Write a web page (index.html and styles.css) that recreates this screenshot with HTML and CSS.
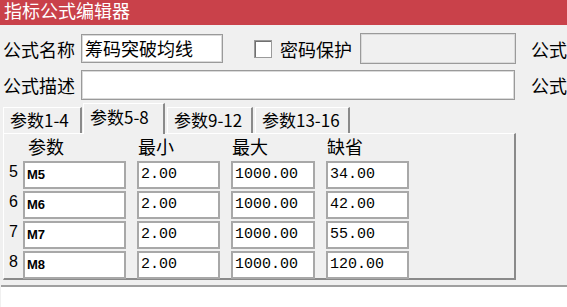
FILE: index.html
```html
<!DOCTYPE html>
<html lang="zh-CN">
<head>
    <meta charset="UTF-8">
    <meta name="viewport" content="width=device-width, initial-scale=1.0">
    <title>指标公式编辑器</title>
    <link rel="stylesheet" href="styles.css">
</head>
<body>

    <div class="window">
        <div class="titlebar">指标公式编辑器</div>

        <div class="field-row row-name">
            <label class="field-label">公式名称</label>
            <div class="input name-input">筹码突破均线</div>
            <span class="checkbox"></span>
            <span class="check-label">密码保护</span>
            <div class="input input-disabled pwd-input"></div>
            <span class="side-label">公式</span>
        </div>

        <div class="field-row row-desc">
            <label class="field-label">公式描述</label>
            <div class="input desc-input"></div>
            <span class="side-label">公式</span>
        </div>

        <div class="tabs">
            <div class="tab tab-1">参数1-4</div>
            <div class="tab tab-2 active">参数5-8</div>
            <div class="tab tab-3">参数9-12</div>
            <div class="tab tab-4">参数13-16</div>
        </div>

        <div class="panel">
            <div class="param-grid">
                <span></span>
                <span class="col-head first">参数</span>
                <span class="col-head">最小</span>
                <span class="col-head">最大</span>
                <span class="col-head">缺省</span>

                <span class="row-num">5</span>
                <div class="cell name-cell">M5</div>
                <div class="cell">2.00</div>
                <div class="cell">1000.00</div>
                <div class="cell">34.00</div>

                <span class="row-num">6</span>
                <div class="cell name-cell">M6</div>
                <div class="cell">2.00</div>
                <div class="cell">1000.00</div>
                <div class="cell">42.00</div>

                <span class="row-num">7</span>
                <div class="cell name-cell">M7</div>
                <div class="cell">2.00</div>
                <div class="cell">1000.00</div>
                <div class="cell">55.00</div>

                <span class="row-num">8</span>
                <div class="cell name-cell">M8</div>
                <div class="cell">2.00</div>
                <div class="cell">1000.00</div>
                <div class="cell">120.00</div>
            </div>
        </div>

        <div class="memo"></div>
    </div>

</body>
</html>
```

FILE: styles.css
```css
body {
    margin: 0;
    background-color: #f0f0f0;
    font-family: "Noto Sans CJK SC", "Liberation Sans", sans-serif;
    color: #000;
    overflow: hidden;
}
.window {
    width: 567px;
    height: 307px;
    overflow: hidden;
}
.titlebar {
    height: 25px;
    background-color: #c9414a;
    color: #fff;
    font-size: 18px;
    line-height: 20px;
    padding-left: 4px;
    white-space: nowrap;
}
.field-row {
    display: flex;
    align-items: center;
    white-space: nowrap;
    padding-left: 3px;
}
.row-name {
    margin-top: 9px;
    height: 29px;
}
.row-desc {
    margin-top: 7px;
    height: 30px;
}
.field-label {
    width: 80px;
    font-size: 18px;
    line-height: 24px;
}
.input {
    box-sizing: border-box;
    height: 100%;
    background-color: #fff;
    border: 1px solid #9a9a9a;
    box-shadow: inset 0 0 0 1px #dadada;
    font-size: 18px;
    line-height: 26px;
    padding-left: 3px;
    flex-shrink: 0;
}
.name-input {
    width: 142px;
}
.input-disabled {
    background-color: #f0f0f0;
}
.pwd-input {
    width: 156px;
    height: 31px;
}
.desc-input {
    width: 434px;
}
.checkbox {
    box-sizing: border-box;
    width: 18px;
    height: 18px;
    margin-left: 31px;
    background-color: #fff;
    border: 1px solid #9a9a9a;
    box-shadow: inset 1px 1px 0 #707070;
    flex-shrink: 0;
}
.check-label {
    margin-left: 8px;
    margin-right: 8px;
    font-size: 18px;
    line-height: 24px;
}
.side-label {
    margin-left: 15px;
    font-size: 18px;
    line-height: 24px;
}
.row-desc .side-label {
    margin-left: 16px;
}
.tabs {
    display: flex;
    align-items: flex-end;
    margin-top: 3px;
    padding-left: 3px;
    height: 30px;
    white-space: nowrap;
}
.tab {
    box-sizing: border-box;
    height: 26px;
    border-top: 1px solid #fff;
    border-left: 1px solid #fff;
    border-right: 2px solid #8a8a8a;
    font-size: 17px;
    line-height: 24px;
    padding-left: 6px;
}
.tab-1 {
    width: 79px;
}
.tab-2 {
    width: 82px;
    margin-left: 1px;
    height: 31px;
    margin-bottom: -1px;
    position: relative;
    background-color: #f0f0f0;
    line-height: 26px;
}
.tab-3 {
    width: 86px;
    margin-left: 2px;
}
.tab-4 {
    width: 95px;
    margin-left: 2px;
}
.panel {
    box-sizing: border-box;
    width: 513px;
    margin-left: 3px;
    height: 147px;
    border-top: 1px solid #fff;
    border-left: 1px solid #fff;
    border-right: 2px solid #8a8a8a;
    border-bottom: 2px solid #8a8a8a;
}
.param-grid {
    display: grid;
    grid-template-columns: 19px 103px 94px 95px 94px;
    grid-template-rows: 25px repeat(4, 28px);
    row-gap: 2px;
}
.col-head {
    font-size: 18px;
    line-height: 25px;
    padding-left: 12px;
}
.col-head.first {
    padding-left: 5px;
}
.row-num {
    font-family: "Liberation Sans", sans-serif;
    font-size: 16px;
    line-height: 22px;
    text-align: center;
}
.cell {
    box-sizing: border-box;
    margin-left: 11px;
    background-color: #fff;
    border: 2px solid #a8a8a8;
    font-family: "Liberation Mono", monospace;
    font-size: 15px;
    line-height: 24px;
    padding-left: 2px;
}
.name-cell {
    margin-left: 0;
    font-family: "Liberation Sans", sans-serif;
    font-size: 13px;
    font-weight: bold;
}
.memo {
    margin-top: 5px;
    margin-left: 1px;
    height: 30px;
    background-color: #fff;
    border-top: 2px solid #a0a0a0;
}
```
